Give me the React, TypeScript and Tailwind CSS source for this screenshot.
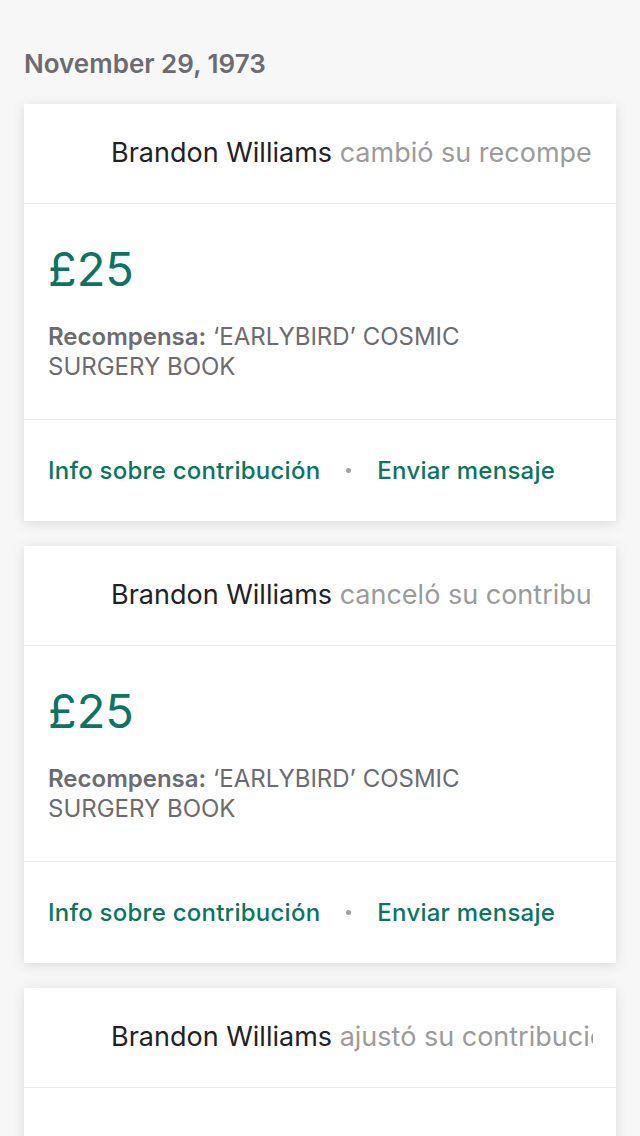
const cards = [
  { name: "Brandon Williams", action: "cambió su recompensa", amount: "£25" },
  { name: "Brandon Williams", action: "canceló su contribución", amount: "£25" },
  { name: "Brandon Williams", action: "ajustó su contribución", amount: "£25" },
];

function ActivityCard({ name, action, amount }: { name: string; action: string; amount: string }) {
  return (
    <div className="mb-[25px] bg-white shadow-[0_2px_12px_rgba(0,0,0,0.12)]">
      <div className="flex h-[100px] items-center border-b border-[#eaeaf0] pl-[87px] pr-[23px]">
        <p className="overflow-hidden whitespace-nowrap text-[27px] text-[#222222]">
          {name} <span className="text-[#9b9b9b]">{action}</span>
        </p>
      </div>
      <div className="border-b border-[#eaeaf0] px-6 pb-[37px] pt-[40px]">
        <p className="text-[47px] leading-[50px] text-[#0a7560]">{amount}</p>
        <p className="mt-[28px] text-[24px] leading-[30px] text-[#6b6b70]">
          <span className="font-semibold">Recompensa:</span> ‘EARLYBIRD’ COSMIC
          <br />
          SURGERY BOOK
        </p>
      </div>
      <div className="flex h-[101px] items-center px-6 text-[24px] font-medium tracking-[0.25px] text-[#0a7560]">
        <span>Info sobre contribución</span>
        <span className="mx-[26px] h-[5px] w-[5px] rounded-full bg-[#a0a0a0]" />
        <span>Enviar mensaje</span>
      </div>
    </div>
  );
}

export default function App() {
  return (
    <div className="min-h-screen bg-[#f7f7f8] px-6 pt-[46px] font-['Inter',sans-serif]">
      <h2 className="mb-[22px] text-[26px] font-semibold leading-[36px] text-[#6b6b70]">
        November 29, 1973
      </h2>
      {cards.map((c, i) => (
        <ActivityCard key={i} {...c} />
      ))}
    </div>
  );
}
